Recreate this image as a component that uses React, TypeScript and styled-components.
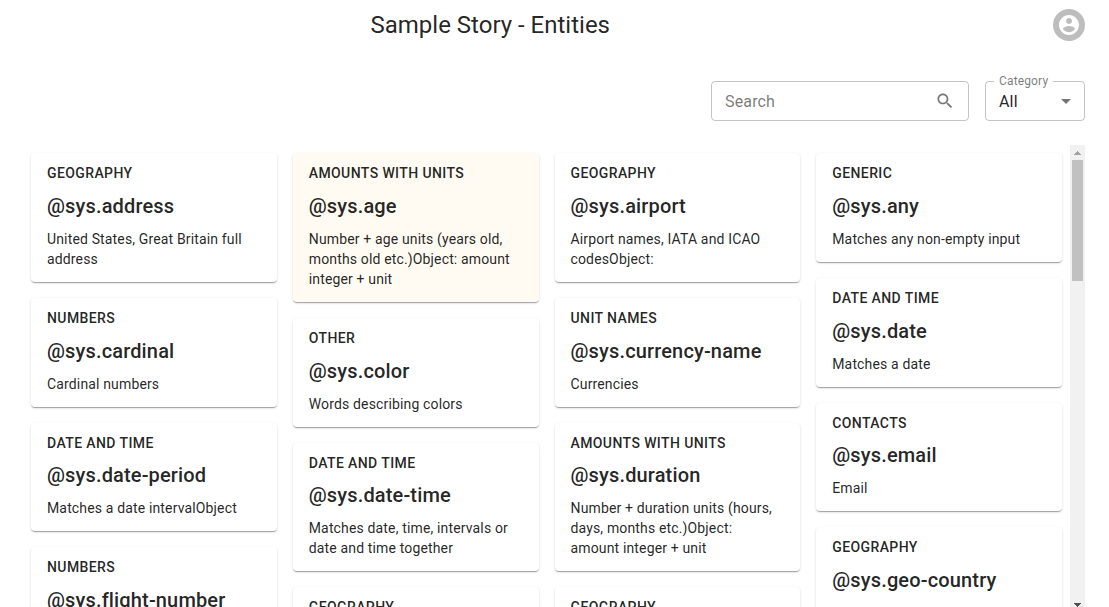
import React from "react";
import styled, { createGlobalStyle } from "styled-components";

const GlobalStyle = createGlobalStyle`
  *, *::before, *::after { box-sizing: border-box; }
  html, body { height: 100%; }
  #root { height: 100%; overflow: hidden; }
  body {
    margin: 0;
    overflow: hidden;
    background: #fff;
    color: rgba(0, 0, 0, 0.87);
    font-family: Roboto, "Liberation Sans", sans-serif;
  }
`;

const Page = styled.div`
  display: flex;
  flex-direction: column;
  width: 1109px;
  padding-right: 24px;
`;

const Header = styled.header`
  display: flex;
  align-items: center;
  height: 50px;
`;

const Title = styled.h1`
  flex: 1;
  margin: 0;
  padding-right: 72.5px;
  font-size: 24px;
  font-weight: 400;
  line-height: 1.334;
  text-align: center;
`;

const Avatar = styled.div`
  display: flex;
  align-items: center;
  justify-content: center;
  width: 32px;
  height: 32px;
  border-radius: 50%;
  background: #bdbdbd;
  color: #fff;
`;

const Icon = styled.svg<{ $size: number }>`
  display: block;
  flex-shrink: 0;
  width: ${(p) => p.$size}px;
  height: ${(p) => p.$size}px;
  fill: currentColor;
`;

const Toolbar = styled.div`
  display: flex;
  justify-content: flex-end;
  gap: 16px;
  padding-top: 31px;
`;

const Field = styled.div<{ $width: number; $right: number }>`
  position: relative;
  display: flex;
  align-items: center;
  justify-content: space-between;
  width: ${(p) => p.$width}px;
  height: 40px;
  padding: 0 ${(p) => p.$right}px 0 13px;
  border: 1px solid rgba(0, 0, 0, 0.23);
  border-radius: 4px;
  font-size: 16px;
  letter-spacing: 0.00938em;
  color: rgba(0, 0, 0, 0.54);
`;

const Value = styled.span`
  color: rgba(0, 0, 0, 0.87);
`;

const FloatingLabel = styled.span`
  position: absolute;
  top: -8px;
  left: 8px;
  width: 59px;
  padding-left: 5px;
  background: #fff;
  font-size: 12px;
  line-height: 14px;
  white-space: nowrap;
`;

const Scroller = styled.main`
  display: flex;
  justify-content: space-between;
  height: 467px;
  margin-top: 24px;
  padding-left: 31px;
`;

const Columns = styled.div`
  display: grid;
  grid-template-columns: repeat(4, 1fr);
  gap: 16px;
  width: 1031px;
  padding-top: 8.4px;
  overflow: visible;
`;

const Column = styled.div`
  display: flex;
  flex-direction: column;
  gap: 16px;
`;

const Card = styled.article<{ $highlighted?: boolean }>`
  padding: 8.05px 16px 12.8px;
  border-radius: 4px;
  background: ${(p) => (p.$highlighted ? "#fffaf2" : "#fff")};
  box-shadow:
    0 2px 1px -1px rgba(0, 0, 0, 0.2),
    0 1px 1px 0 rgba(0, 0, 0, 0.14),
    0 1px 3px 0 rgba(0, 0, 0, 0.12);
`;

const Category = styled.div`
  margin-bottom: 4.25px;
  font-size: 14px;
  font-weight: 500;
  line-height: 1.75;
  letter-spacing: 0.02857em;
  text-transform: uppercase;
`;

const Name = styled.h2`
  margin: 0 0 0.35em;
  font-size: 20px;
  font-weight: 500;
  line-height: 1.6;
  letter-spacing: 0.0075em;
`;

const Description = styled.p`
  margin: 0;
  font-size: 14px;
  line-height: 1.43;
  letter-spacing: 0.01071em;
`;

const Scrollbar = styled.div`
  display: flex;
  flex-direction: column;
  align-items: center;
  width: 15px;
  background: #f1f1f1;
`;

const ScrollArrow = styled.svg`
  display: block;
  width: 15px;
  height: 15px;
  shape-rendering: crispEdges;
`;

const Thumb = styled.div`
  width: 11px;
  height: 121px;
  margin-bottom: auto;
  background: #c1c1c1;
`;

interface Entity {
  category: string;
  name?: string;
  description?: string;
  highlighted?: boolean;
}

const columns: Entity[][] = [
  [
    { category: "Geography", name: "@sys.address", description: "United States, Great Britain full address" },
    { category: "Numbers", name: "@sys.cardinal", description: "Cardinal numbers" },
    { category: "Date and time", name: "@sys.date-period", description: "Matches a date intervalObject" },
    { category: "Numbers", name: "@sys.flight-number" },
  ],
  [
    {
      category: "Amounts with units",
      name: "@sys.age",
      description: "Number + age units (years old, months old etc.)Object: amount integer + unit",
      highlighted: true,
    },
    { category: "Other", name: "@sys.color", description: "Words describing colors" },
    {
      category: "Date and time",
      name: "@sys.date-time",
      description: "Matches date, time, intervals or date and time together",
    },
    { category: "Geography" },
  ],
  [
    { category: "Geography", name: "@sys.airport", description: "Airport names, IATA and ICAO codesObject:" },
    { category: "Unit names", name: "@sys.currency-name", description: "Currencies" },
    {
      category: "Amounts with units",
      name: "@sys.duration",
      description: "Number + duration units (hours, days, months etc.)Object: amount integer + unit",
    },
    { category: "Geography" },
  ],
  [
    { category: "Generic", name: "@sys.any", description: "Matches any non-empty input" },
    { category: "Date and time", name: "@sys.date", description: "Matches a date" },
    { category: "Contacts", name: "@sys.email", description: "Email" },
    { category: "Geography", name: "@sys.geo-country" },
  ],
];

function EntityCard({ category, name, description, highlighted }: Entity) {
  return (
    <Card $highlighted={highlighted}>
      <Category>{category}</Category>
      {name && <Name>{name}</Name>}
      {description && <Description>{description}</Description>}
    </Card>
  );
}

export default function App() {
  return (
    <>
      <GlobalStyle />
      <Page>
        <Header>
          <Title>Sample Story - Entities</Title>
          <Avatar>
            <Icon $size={24} viewBox="0 0 24 24">
              <path d="M12 2C6.48 2 2 6.48 2 12s4.48 10 10 10 10-4.48 10-10S17.52 2 12 2zm0 3c1.66 0 3 1.34 3 3s-1.34 3-3 3-3-1.34-3-3 1.34-3 3-3zm0 14.2c-2.5 0-4.71-1.28-6-3.22.03-1.99 4-3.08 6-3.08 1.99 0 5.97 1.09 6 3.08-1.29 1.94-3.5 3.22-6 3.22z" />
            </Icon>
          </Avatar>
        </Header>
        <Toolbar>
          <Field $width={258} $right={13}>
            <span>Search</span>
            <Icon $size={20} viewBox="0 0 24 24">
              <path d="M15.5 14h-.79l-.28-.27C15.41 12.59 16 11.11 16 9.5 16 5.91 13.09 3 9.5 3S3 5.91 3 9.5 5.91 16 9.5 16c1.61 0 3.09-.59 4.23-1.57l.27.28v.79l5 4.99L20.49 19l-4.99-5zm-6 0C7.01 14 5 11.99 5 9.5S7.01 5 9.5 5 14 7.01 14 9.5 11.99 14 9.5 14z" />
            </Icon>
          </Field>
          <Field $width={100} $right={6}>
            <FloatingLabel>Category</FloatingLabel>
            <Value>All</Value>
            <Icon $size={24} viewBox="0 0 24 24">
              <path d="M7 10l5 5 5-5z" />
            </Icon>
          </Field>
        </Toolbar>
        <Scroller>
          <Columns>
            {columns.map((entities, i) => (
              <Column key={i}>
                {entities.map((entity, j) => (
                  <EntityCard key={j} {...entity} />
                ))}
              </Column>
            ))}
          </Columns>
          <Scrollbar>
            <ScrollArrow viewBox="0 0 15 15">
              <path fill="#a3a3a3" d="M7 6h1v1h1v1h1v1h1v1H4V9h1V8h1V7h1z" />
            </ScrollArrow>
            <Thumb />
            <ScrollArrow viewBox="0 0 15 15">
              <path fill="#505050" d="M4 6h7v1h-1v1H9v1H8v1H7V9H6V8H5V7H4z" />
            </ScrollArrow>
          </Scrollbar>
        </Scroller>
      </Page>
    </>
  );
}
